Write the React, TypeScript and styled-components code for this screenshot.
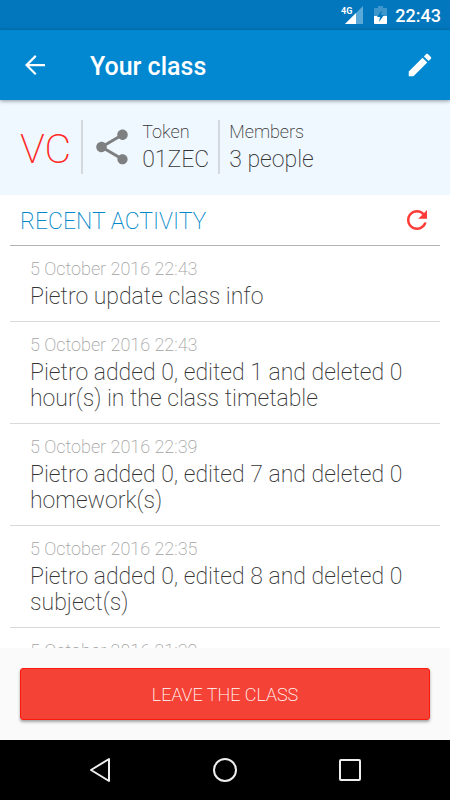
import React from "react";
import styled, { createGlobalStyle } from "styled-components";

const GlobalStyle = createGlobalStyle`
  *, *::before, *::after { box-sizing: border-box; }
  body {
    margin: 0;
    background: #fafafa;
    font-family: Roboto, "Liberation Sans", sans-serif;
    font-weight: 200;
    color: #343434;
  }
  h1, h2, p, ul, dl, dd { margin: 0; padding: 0; }
`;

const Screen = styled.div`
  display: flex;
  flex-direction: column;
  height: 100vh;
`;

const StatusBar = styled.div`
  display: flex;
  flex: none;
  align-items: center;
  justify-content: flex-end;
  height: 30px;
  padding-right: 9px;
  background: #0277bd;
  color: #fff;
  font-size: 18px;
  font-weight: 500;
`;

const SignalIcon = styled.svg`
  width: 24px;
  height: 20px;
  margin-right: 10px;
`;

const BatteryIcon = styled.svg`
  width: 13px;
  height: 20px;
  margin-right: 8px;
`;

const AppBar = styled.header`
  position: relative;
  display: flex;
  flex: none;
  align-items: center;
  height: 70px;
  padding: 0 15px 0 20px;
  background: #0288d1;
  color: #fff;
  box-shadow: 0 1px 4px rgba(0, 0, 0, 0.4);
`;

const IconButton = styled.button`
  display: flex;
  flex: none;
  padding: 0;
  border: 0;
  background: none;
  color: inherit;
  cursor: pointer;

  svg {
    width: 30px;
    height: 30px;
    fill: currentColor;
  }
`;

const Title = styled.h1`
  flex: 1;
  padding: 3px 0 0 40px;
  font-size: 25px;
  line-height: 30px;
  font-weight: 500;
`;

const Summary = styled.section`
  display: flex;
  flex: none;
  align-items: center;
  height: 95px;
  padding: 0 20px 2px;
  background: #eff7ff;
`;

const Initials = styled.div`
  padding: 4px 10px 0 0;
  color: #ff2b27;
  font-size: 41px;
  line-height: 50px;
`;

const Divider = styled.span`
  width: 2px;
  height: 54px;
  background: #d4d9de;
`;

const ShareButton = styled(IconButton)`
  margin: 0 9px 0 8px;
  color: #7d7f81;

  svg {
    width: 42px;
    height: 42px;
  }
`;

const Fact = styled.dl<{ $lead?: boolean }>`
  padding: 0 ${(p) => (p.$lead ? 0 : 9)}px 0 ${(p) => (p.$lead ? 9 : 0)}px;

  dt {
    font-size: 18px;
    line-height: 26px;
  }
  dd {
    font-size: 23px;
    line-height: 29px;
  }
`;

const Activity = styled.main`
  display: flex;
  flex: 1;
  flex-direction: column;
  min-height: 0;
  padding: 0 10px;
  background: #fff;
`;

const ActivityHeader = styled.div`
  display: flex;
  flex: none;
  align-items: center;
  justify-content: space-between;
  height: 51px;
  padding: 0 8px 0 10px;
  border-bottom: 1px solid #b3b3b3;
`;

const ActivityTitle = styled.h2`
  padding-top: 3px;
  color: #0088c8;
  font-size: 23px;
  font-weight: 200;
  text-transform: uppercase;
`;

const RefreshButton = styled(IconButton)`
  color: #ff3b37;
`;

const Feed = styled.ul`
  flex: 1;
  min-height: 0;
  overflow-y: auto;
  scrollbar-width: none;
  list-style: none;
`;

const Entry = styled.li`
  padding: 12px 20px 11px;
  border-bottom: 1px solid #d9d9d9;
`;

const When = styled.time`
  display: block;
  color: #a3a3a3;
  font-size: 18px;
  line-height: 22px;
`;

const What = styled.p`
  padding-top: 4px;
  font-size: 23px;
  line-height: 26px;
`;

const Footer = styled.footer`
  flex: none;
  padding: 20px;
  background: #fafafa;
`;

const LeaveButton = styled.button`
  display: block;
  width: 100%;
  height: 52px;
  border: 1px solid #ff1a0c;
  border-radius: 3px;
  background: #f44336;
  box-shadow: 0 2px 3px rgba(0, 0, 0, 0.35);
  color: #fff;
  font: inherit;
  font-size: 18px;
  text-transform: uppercase;
  cursor: pointer;
`;

const NavBar = styled.nav`
  display: flex;
  flex: none;
  align-items: center;
  justify-content: center;
  gap: 95px;
  height: 60px;
  background: #000;
  color: #fff;

  svg {
    fill: none;
    stroke: #eee;
    stroke-width: 2;
    stroke-linejoin: round;
  }
`;

const entries = [
  { at: "5 October 2016 22:43", text: "Pietro update class info" },
  { at: "5 October 2016 22:43", text: "Pietro added 0, edited 1 and deleted 0 hour(s) in the class timetable" },
  { at: "5 October 2016 22:39", text: "Pietro added 0, edited 7 and deleted 0 homework(s)" },
  { at: "5 October 2016 22:35", text: "Pietro added 0, edited 8 and deleted 0 subject(s)" },
  { at: "5 October 2016 21:39", text: "" },
];

export default function App() {
  return (
    <>
      <GlobalStyle />
      <Screen>
        <StatusBar>
          <SignalIcon viewBox="0 0 24 20" aria-label="4G signal">
            <path d="M23 1v18H5z" fill="#5aa9d8" />
            <path d="M16 8v11H5z" fill="#fff" />
            <text x="1" y="9" fontSize="9" fontWeight="700" fill="#fff">4G</text>
          </SignalIcon>
          <BatteryIcon viewBox="0 0 13 20" aria-label="Battery charging">
            <path d="M4 1h5v2h3q1 0 1 1v7H0V4q0-1 1-1h3z" fill="#3d97cd" />
            <path d="M0 11h13v7q0 1-1 1H1q-1 0-1-1z" fill="#fff" />
            <path d="M8 5l-5 7h3l-1 5 5-7H7z" fill="#0277bd" />
          </BatteryIcon>
          <span>22:43</span>
        </StatusBar>

        <AppBar>
          <IconButton aria-label="Back">
            <svg viewBox="0 0 24 24">
              <path d="M20 11.1H7.4l5.8-5.8L12 4l-8 8 8 8 1.2-1.3-5.8-5.8H20z" />
            </svg>
          </IconButton>
          <Title>Your class</Title>
          <IconButton aria-label="Edit class">
            <svg viewBox="0 0 24 24">
              <path d="M3 17.25V21h3.75L17.81 9.94l-3.75-3.75L3 17.25zM20.71 7.04c.39-.39.39-1.02 0-1.41l-2.34-2.34c-.39-.39-1.02-.39-1.41 0l-1.83 1.83 3.75 3.75 1.83-1.83z" />
            </svg>
          </IconButton>
        </AppBar>

        <Summary>
          <Initials>VC</Initials>
          <Divider />
          <ShareButton aria-label="Share token">
            <svg viewBox="0 0 24 24">
              <path d="M18 16.08c-.76 0-1.44.3-1.96.77L8.91 12.7c.05-.23.09-.46.09-.7s-.04-.47-.09-.7l7.05-4.11c.54.5 1.25.81 2.04.81 1.66 0 3-1.34 3-3s-1.34-3-3-3-3 1.34-3 3c0 .24.04.47.09.7L8.04 9.81C7.5 9.31 6.79 9 6 9c-1.66 0-3 1.34-3 3s1.34 3 3 3c.79 0 1.5-.31 2.04-.81l7.12 4.16c-.05.21-.08.43-.08.65 0 1.61 1.31 2.92 2.92 2.92 1.61 0 2.92-1.31 2.92-2.92s-1.31-2.92-2.92-2.92z" />
            </svg>
          </ShareButton>
          <Fact>
            <dt>Token</dt>
            <dd>01ZEC</dd>
          </Fact>
          <Divider />
          <Fact $lead>
            <dt>Members</dt>
            <dd>3 people</dd>
          </Fact>
        </Summary>

        <Activity>
          <ActivityHeader>
            <ActivityTitle>Recent activity</ActivityTitle>
            <RefreshButton aria-label="Refresh">
              <svg viewBox="0 0 24 24">
                <path d="M17.65 6.35C16.2 4.9 14.21 4 12 4c-4.42 0-7.99 3.58-7.99 8s3.57 8 7.99 8c3.73 0 6.84-2.55 7.73-6h-2.08c-.82 2.33-3.04 4-5.65 4-3.31 0-6-2.69-6-6s2.69-6 6-6c1.66 0 3.14.69 4.22 1.78L13 11h7V4l-2.35 2.35z" />
              </svg>
            </RefreshButton>
          </ActivityHeader>
          <Feed>
            {entries.map((entry, i) => (
              <Entry key={i}>
                <When>{entry.at}</When>
                {entry.text && <What>{entry.text}</What>}
              </Entry>
            ))}
          </Feed>
        </Activity>

        <Footer>
          <LeaveButton>Leave the class</LeaveButton>
        </Footer>

        <NavBar>
          <IconButton aria-label="System back">
            <svg viewBox="0 0 30 30">
              <path d="M24 4v22L6 15z" />
            </svg>
          </IconButton>
          <IconButton aria-label="Home">
            <svg viewBox="0 0 30 30">
              <circle cx="15" cy="15" r="11" />
            </svg>
          </IconButton>
          <IconButton aria-label="Recent apps">
            <svg viewBox="0 0 30 30">
              <rect x="5" y="5" width="20" height="20" rx="1" />
            </svg>
          </IconButton>
        </NavBar>
      </Screen>
    </>
  );
}
